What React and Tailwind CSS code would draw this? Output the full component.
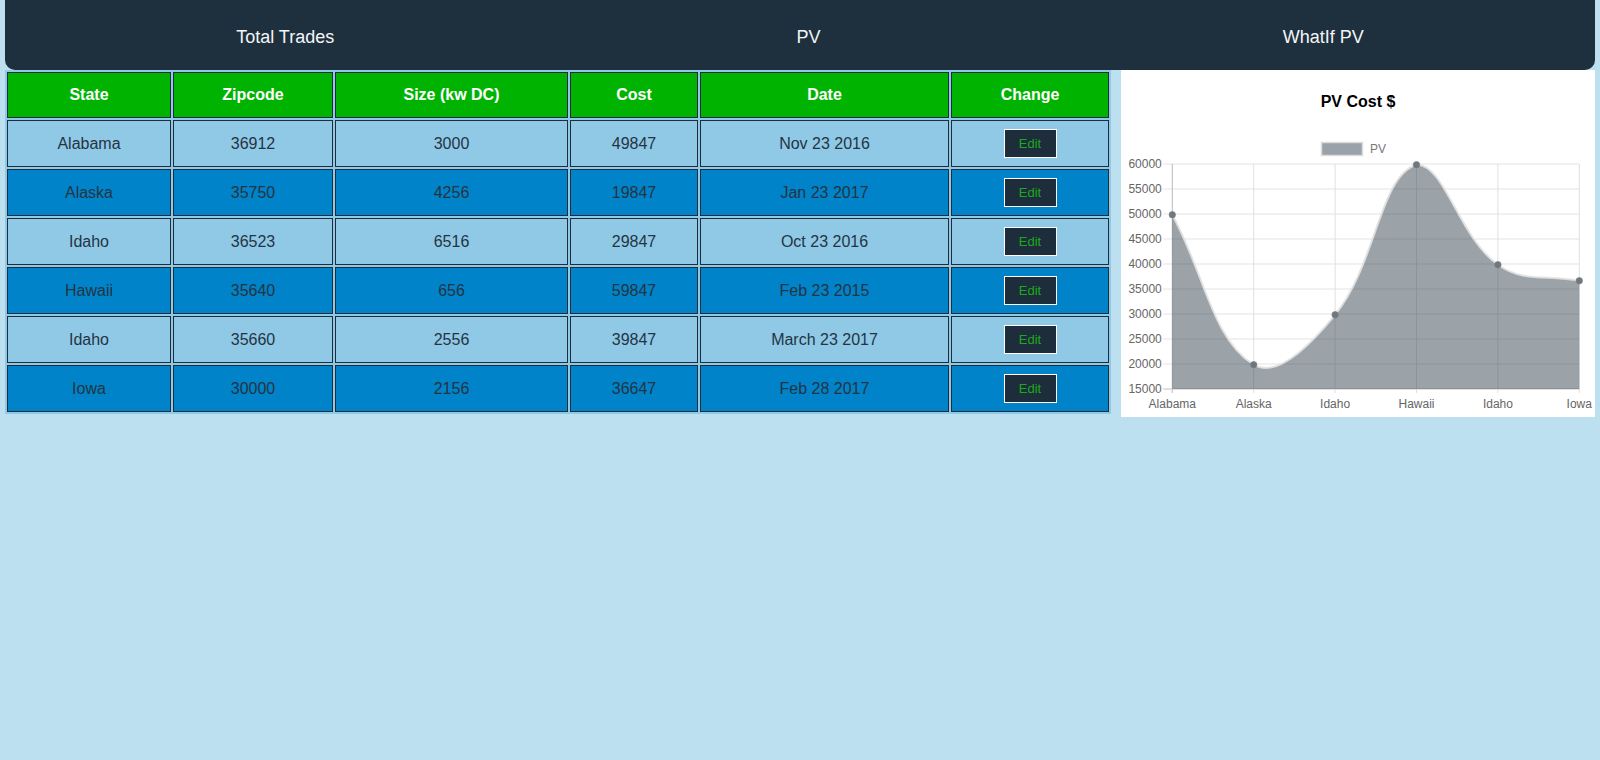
const rows = [
  { state: 'Alabama', zip: '36912', size: '3000', cost: 49847, date: 'Nov 23 2016' },
  { state: 'Alaska', zip: '35750', size: '4256', cost: 19847, date: 'Jan 23 2017' },
  { state: 'Idaho', zip: '36523', size: '6516', cost: 29847, date: 'Oct 23 2016' },
  { state: 'Hawaii', zip: '35640', size: '656', cost: 59847, date: 'Feb 23 2015' },
  { state: 'Idaho', zip: '35660', size: '2556', cost: 39847, date: 'March 23 2017' },
  { state: 'Iowa', zip: '30000', size: '2156', cost: 36647, date: 'Feb 28 2017' },
];

const font = { fontFamily: '"Liberation Sans", Arial, sans-serif' };

// chart geometry (svg coords, svg sits under the title)
const left = 51.3;
const step = 81.4;
const top = 44;
const bottom = 269;
const yMin = 15000;
const yMax = 60000;
const yTicks = [60000, 55000, 50000, 45000, 40000, 35000, 30000, 25000, 20000, 15000];

function yOf(v) {
  return bottom - ((v - yMin) / (yMax - yMin)) * (bottom - top);
}

function spline(a, b, c, t) {
  const d01 = Math.hypot(b.x - a.x, b.y - a.y);
  const d12 = Math.hypot(c.x - b.x, c.y - b.y);
  const fa = (t * d01) / (d01 + d12);
  const fb = (t * d12) / (d01 + d12);
  return {
    inner: { x: b.x - fa * (c.x - a.x), y: b.y - fa * (c.y - a.y) },
    outer: { x: b.x + fb * (c.x - a.x), y: b.y + fb * (c.y - a.y) },
  };
}

const clampY = (y) => Math.min(bottom, Math.max(top, y));

function buildPath(pts) {
  const cps = pts.map((p, i) => {
    const prev = i === 0 ? p : pts[i - 1];
    const next = i === pts.length - 1 ? p : pts[i + 1];
    const cp = spline(prev, p, next, 0.4);
    cp.inner.y = clampY(cp.inner.y);
    cp.outer.y = clampY(cp.outer.y);
    return cp;
  });
  let d = `M${pts[0].x},${pts[0].y}`;
  for (let i = 1; i < pts.length; i++) {
    d += ` C${cps[i - 1].outer.x},${cps[i - 1].outer.y} ${cps[i].inner.x},${cps[i].inner.y} ${pts[i].x},${pts[i].y}`;
  }
  return d;
}

function CostChart() {
  const pts = rows.map((r, i) => ({ x: left + i * step, y: yOf(r.cost) }));
  const line = buildPath(pts);
  const area = `${line} L${pts[pts.length - 1].x},${bottom} L${pts[0].x},${bottom} Z`;
  const right = pts[pts.length - 1].x;

  return (
    <svg width="474" height="297" className="block">
      {/* legend */}
      <rect x="200.5" y="22.5" width="41" height="13" fill="#9aa1a8" stroke="#dcdcdc" strokeWidth="1.5" />
      <text x="249" y="33" fontSize="12" fill="#777" style={font}>PV</text>

      {/* grid */}
      {yTicks.map((v) => (
        <g key={v}>
          <line x1={left - 9} x2={right} y1={yOf(v)} y2={yOf(v)} stroke="#e3e3e3" strokeWidth="1" />
          <text x={left - 10.5} y={yOf(v) + 4} fontSize="12" fill="#666" textAnchor="end" style={font}>
            {v}
          </text>
        </g>
      ))}
      {pts.map((p, i) => (
        <line key={i} x1={p.x} x2={p.x} y1={top} y2={bottom + 4} stroke={i === 0 ? '#bbb' : '#e0e0e0'} strokeWidth="1" />
      ))}
      <line x1={left - 9} x2={right} y1={bottom} y2={bottom} stroke="#cfcfcf" strokeWidth="1" />

      {/* data */}
      <path d={area} fill="rgba(55,70,82,0.5)" />
      <path d={line} fill="none" stroke="rgba(225,225,225,0.9)" strokeWidth="2" />
      {pts.map((p, i) => (
        <circle key={i} cx={p.x} cy={p.y} r="3.2" fill="#6f787f" stroke="rgba(120,128,135,0.7)" strokeWidth="1" />
      ))}

      {/* x labels */}
      {rows.map((r, i) => (
        <text key={i} x={left + i * step} y={288} fontSize="12" fill="#666" textAnchor="middle" style={font}>
          {r.state}
        </text>
      ))}
    </svg>
  );
}

export default function App() {
  return (
    <div className="min-h-screen bg-[#bde0f1]" style={font}>
      {/* top bar */}
      <div className="mx-[5px] h-[70px] bg-[#1e2f3d] rounded-b-[10px] flex justify-around items-center text-[18px] text-[#f3f6f9] pt-[4px]">
        <span>Total Trades</span>
        <span>PV</span>
        <span>WhatIf PV</span>
      </div>

      <div className="flex items-start gap-[10px] px-[5px]">
        {/* trades table */}
        <div className="w-[1106px] bg-[#8fc9e6]">
          <table className="w-full table-fixed border-separate border-spacing-[2px] text-[16px]">
            <thead>
              <tr>
                <th className="w-[164px] h-[46px] bg-[#00b300] border border-[#1e2d3b] text-white font-bold">State</th>
                <th className="w-[160px] h-[46px] bg-[#00b300] border border-[#1e2d3b] text-white font-bold">Zipcode</th>
                <th className="w-[233px] h-[46px] bg-[#00b300] border border-[#1e2d3b] text-white font-bold">Size (kw DC)</th>
                <th className="w-[128px] h-[46px] bg-[#00b300] border border-[#1e2d3b] text-white font-bold">Cost</th>
                <th className="w-[249px] h-[46px] bg-[#00b300] border border-[#1e2d3b] text-white font-bold">Date</th>
                <th className="h-[46px] bg-[#00b300] border border-[#1e2d3b] text-white font-bold">Change</th>
              </tr>
            </thead>
            <tbody>
              {rows.map((r, i) => {
                const bg = i % 2 === 0 ? 'bg-[#8fc9e6]' : 'bg-[#0083c8]';
                return (
                  <tr key={i} className={`${bg} text-[#243444] text-center`}>
                    <td className="h-[47px] border border-[#1e2d3b]">{r.state}</td>
                    <td className="h-[47px] border border-[#1e2d3b]">{r.zip}</td>
                    <td className="h-[47px] border border-[#1e2d3b]">{r.size}</td>
                    <td className="h-[47px] border border-[#1e2d3b]">{r.cost}</td>
                    <td className="h-[47px] border border-[#1e2d3b]">{r.date}</td>
                    <td className="h-[47px] border border-[#1e2d3b]">
                      <button className="w-[53px] h-[29px] bg-[#1e2d3b] border border-white text-[#1aab1a] text-[13px] align-middle">
                        Edit
                      </button>
                    </td>
                  </tr>
                );
              })}
            </tbody>
          </table>
        </div>

        {/* chart panel */}
        <div className="flex-1 h-[347px] bg-white flex flex-col items-center">
          <div className="h-[50px] pt-[22px] text-[16px] font-bold text-black leading-[20px]">PV Cost $</div>
          <CostChart />
        </div>
      </div>
    </div>
  );
}
